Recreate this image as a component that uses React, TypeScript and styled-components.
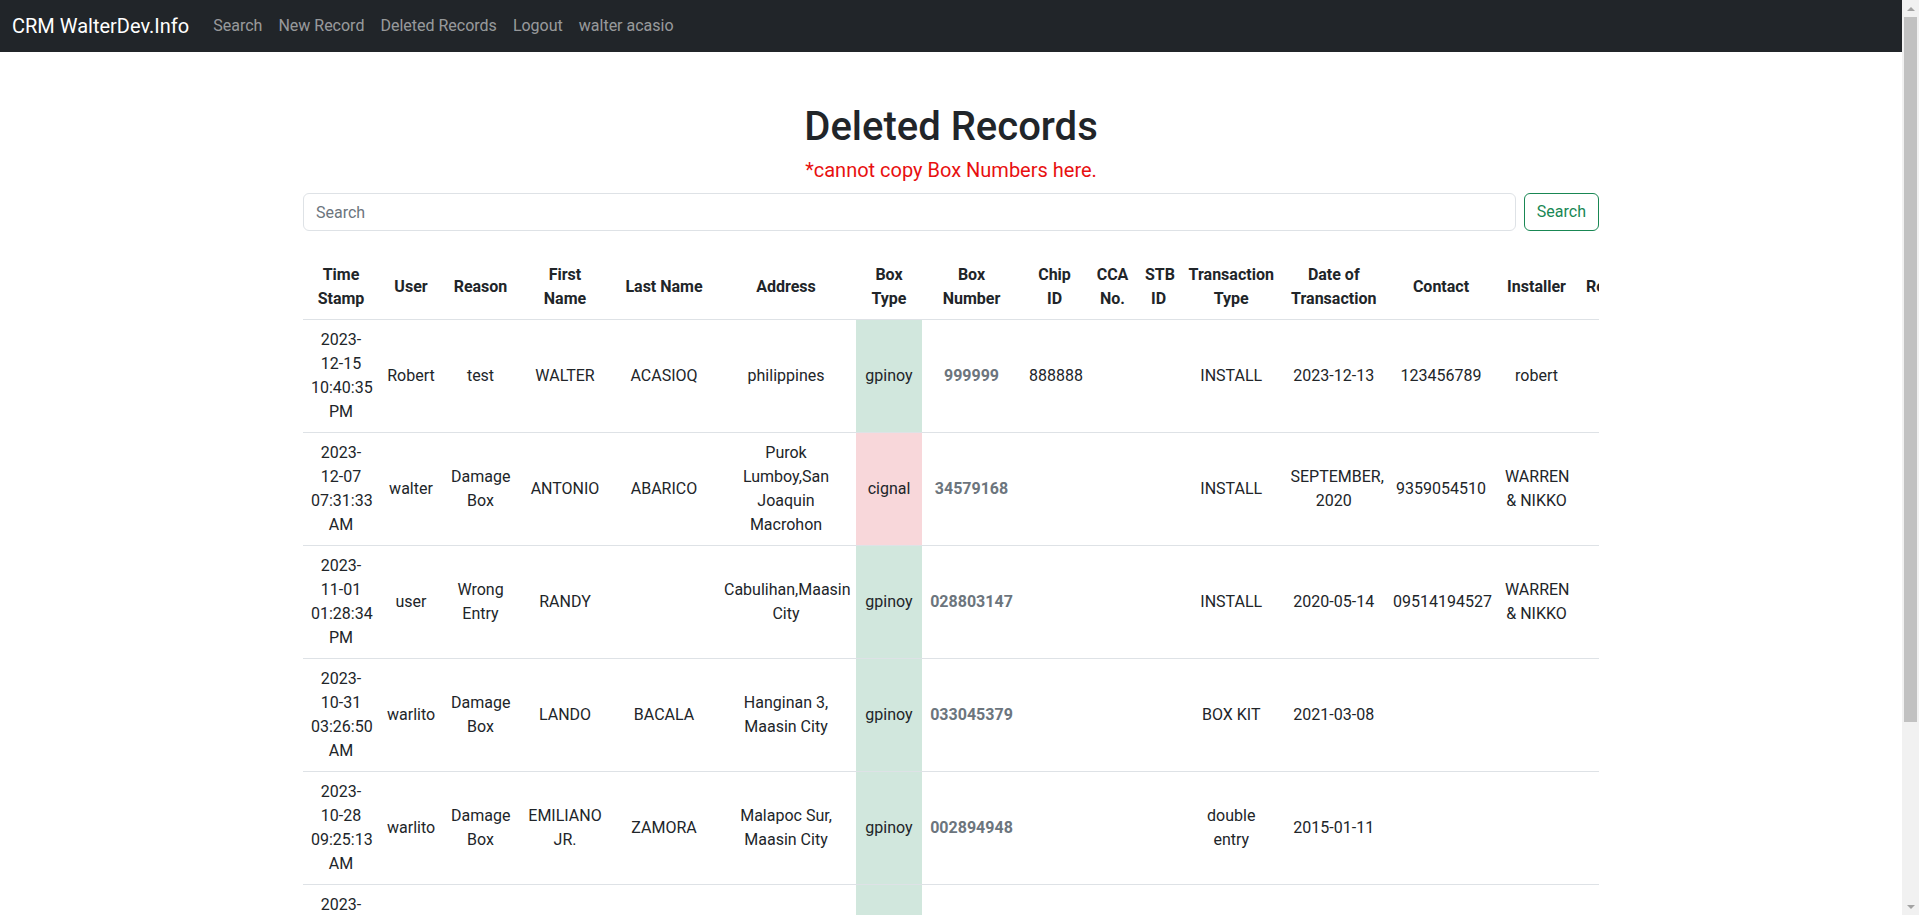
import React from "react";
import styled, { createGlobalStyle } from "styled-components";

const GlobalStyle = createGlobalStyle`
  *, *::before, *::after { box-sizing: border-box; }
  html, body { margin: 0; padding: 0; }
  body {
    padding-right: 17px;
    font-family: Roboto, "Noto Sans", "Liberation Sans", sans-serif;
    font-size: 16px;
    line-height: 1.5;
    color: #212529;
    background: #fff;
  }
`;

const Navbar = styled.nav`
  display: flex;
  align-items: center;
  height: 52px;
  padding: 0 12px;
  background: #212529;
`;

const Brand = styled.a`
  color: #fff;
  font-size: 20px;
  line-height: 30px;
  margin-right: 16px;
  text-decoration: none;
`;

const NavList = styled.div`
  display: flex;
  align-items: center;
`;

const NavLink = styled.a`
  padding: 8px;
  color: rgba(255, 255, 255, 0.55);
  font-size: 16px;
  line-height: 24px;
  text-decoration: none;
`;

const Container = styled.main`
  max-width: 1320px;
  margin: 0 auto;
  padding: 51px 12px 0;
`;

const Title = styled.h1`
  margin: 0 0 4px;
  text-align: center;
  font-size: 40px;
  font-weight: 500;
  line-height: 1.2;
`;

const Notice = styled.p`
  margin: 0 0 8px;
  text-align: center;
  color: #e81010;
  font-size: 20px;
  line-height: 30px;
`;

const SearchForm = styled.form`
  display: flex;
  gap: 8px;
  margin-bottom: 24px;
`;

const SearchInput = styled.input`
  flex: 1;
  height: 38px;
  padding: 6px 12px;
  border: 1px solid #dee2e6;
  border-radius: 6px;
  font: inherit;
  color: #212529;
  &::placeholder { color: #6c757d; }
`;

const SearchButton = styled.button`
  height: 38px;
  padding: 6px 12px;
  border: 1px solid #198754;
  border-radius: 6px;
  background: transparent;
  color: #198754;
  font: inherit;
`;

const TableWrap = styled.div`
  overflow-x: auto;
`;

const Table = styled.table`
  border-collapse: collapse;
  table-layout: fixed;
`;

const Col = styled.col<{ $w: number }>`
  width: ${(p) => p.$w}px;
`;

const Th = styled.th`
  padding: 8px;
  font-weight: 700;
  text-align: center;
  vertical-align: middle;
  border-bottom: 1px solid #dee2e6;
`;

const Td = styled.td<{ $tone?: "success" | "danger" }>`
  padding: 8px;
  text-align: center;
  vertical-align: middle;
  border-bottom: 1px solid #dee2e6;
  background: ${(p) =>
    p.$tone === "success" ? "#d1e7dd" : p.$tone === "danger" ? "#f8d7da" : "transparent"};
`;

const BoxNo = styled.span`
  font-weight: 700;
  color: #6c757d;
`;

/* emulation of the classic browser scrollbar shown in the screenshot */
const ScrollTrack = styled.div`
  position: fixed;
  top: 0;
  right: 0;
  width: 17px;
  height: 100vh;
  background: #f1f1f1;
  display: flex;
  flex-direction: column;
  align-items: center;
`;

const ScrollArrow = styled.div<{ $down?: boolean }>`
  height: 17px;
  width: 17px;
  display: flex;
  align-items: center;
  justify-content: center;
  &::before {
    content: "";
    border-left: 4px solid transparent;
    border-right: 4px solid transparent;
    ${(p) => (p.$down ? "border-top: 4px solid #a3a3a3;" : "border-bottom: 4px solid #a3a3a3;")}
  }
`;

const ScrollThumb = styled.div`
  width: 13px;
  height: 705px;
  background: #c1c1c1;
`;

const ScrollSpacer = styled.div`
  flex: 1;
`;

const columns: [string, number][] = [
  ["Time Stamp", 76],
  ["User", 64],
  ["Reason", 75],
  ["First Name", 94],
  ["Last Name", 104],
  ["Address", 140],
  ["Box Type", 66],
  ["Box Number", 99],
  ["Chip ID", 67],
  ["CCA No.", 49],
  ["STB ID", 43],
  ["Transaction Type", 102.5],
  ["Date of Transaction", 102.5],
  ["Contact", 112],
  ["Installer", 79],
  ["Remarks", 84],
  ["Action", 90],
];

type Row = {
  ts: string;
  user: string;
  reason: string;
  first: string;
  last: string;
  address: string;
  boxType: "gpinoy" | "cignal";
  boxNo: string;
  chip: string;
  cca: string;
  stb: string;
  txType: string;
  txDate: string;
  contact: string;
  installer: string;
  remarks: string;
};

const rows: Row[] = [
  { ts: "2023-12-15 10:40:35 PM", user: "Robert", reason: "test", first: "WALTER", last: "ACASIOQ", address: "philippines", boxType: "gpinoy", boxNo: "999999", chip: "888888", cca: "", stb: "", txType: "INSTALL", txDate: "2023-12-13", contact: "123456789", installer: "robert", remarks: "" },
  { ts: "2023-12-07 07:31:33 AM", user: "walter", reason: "Damage Box", first: "ANTONIO", last: "ABARICO", address: "Purok Lumboy,San Joaquin Macrohon", boxType: "cignal", boxNo: "34579168", chip: "", cca: "", stb: "", txType: "INSTALL", txDate: "SEPTEMBER, 2020", contact: "9359054510", installer: "WARREN & NIKKO", remarks: "" },
  { ts: "2023-11-01 01:28:34 PM", user: "user", reason: "Wrong Entry", first: "RANDY", last: "", address: "Cabulihan,Maasin City", boxType: "gpinoy", boxNo: "028803147", chip: "", cca: "", stb: "", txType: "INSTALL", txDate: "2020-05-14", contact: "09514194527", installer: "WARREN & NIKKO", remarks: "" },
  { ts: "2023-10-31 03:26:50 AM", user: "warlito", reason: "Damage Box", first: "LANDO", last: "BACALA", address: "Hanginan 3, Maasin City", boxType: "gpinoy", boxNo: "033045379", chip: "", cca: "", stb: "", txType: "BOX KIT", txDate: "2021-03-08", contact: "", installer: "", remarks: "" },
  { ts: "2023-10-28 09:25:13 AM", user: "warlito", reason: "Damage Box", first: "EMILIANO JR.", last: "ZAMORA", address: "Malapoc Sur, Maasin City", boxType: "gpinoy", boxNo: "002894948", chip: "", cca: "", stb: "", txType: "double entry", txDate: "2015-01-11", contact: "", installer: "", remarks: "" },
  { ts: "2023-10-21 04:12:08 PM", user: "warlito", reason: "Damage Box", first: "JUNREY", last: "LAGUMBAY", address: "Tunga-tunga, Maasin City", boxType: "gpinoy", boxNo: "017455216", chip: "", cca: "", stb: "", txType: "INSTALL", txDate: "2019-08-20", contact: "", installer: "", remarks: "" },
  { ts: "2023-10-18 11:05:47 AM", user: "walter", reason: "Wrong Entry", first: "MARLON", last: "GALLEGO", address: "Combado, Maasin City", boxType: "gpinoy", boxNo: "024417863", chip: "", cca: "", stb: "", txType: "INSTALL", txDate: "2020-02-03", contact: "", installer: "", remarks: "" },
];

const tableWidth = columns.reduce((s, c) => s + c[1], 0);

export default function App() {
  return (
    <>
      <GlobalStyle />
      <Navbar>
        <Brand href="#">CRM WalterDev.Info</Brand>
        <NavList>
          <NavLink href="#">Search</NavLink>
          <NavLink href="#">New Record</NavLink>
          <NavLink href="#">Deleted Records</NavLink>
          <NavLink href="#">Logout</NavLink>
          <NavLink href="#">walter acasio</NavLink>
        </NavList>
      </Navbar>
      <Container>
        <Title>Deleted Records</Title>
        <Notice>*cannot copy Box Numbers here.</Notice>
        <SearchForm onSubmit={(e) => e.preventDefault()}>
          <SearchInput type="search" placeholder="Search" />
          <SearchButton type="submit">Search</SearchButton>
        </SearchForm>
        <TableWrap>
          <Table style={{ width: tableWidth }}>
            <colgroup>
              {columns.map(([name, w]) => (
                <Col key={name} $w={w} />
              ))}
            </colgroup>
            <thead>
              <tr>
                {columns.map(([name]) => (
                  <Th key={name}>{name}</Th>
                ))}
              </tr>
            </thead>
            <tbody>
              {rows.map((r, i) => (
                <tr key={i}>
                  <Td>{r.ts}</Td>
                  <Td>{r.user}</Td>
                  <Td>{r.reason}</Td>
                  <Td>{r.first}</Td>
                  <Td>{r.last}</Td>
                  <Td>{r.address}</Td>
                  <Td $tone={r.boxType === "cignal" ? "danger" : "success"}>{r.boxType}</Td>
                  <Td>
                    <BoxNo>{r.boxNo}</BoxNo>
                  </Td>
                  <Td>{r.chip}</Td>
                  <Td>{r.cca}</Td>
                  <Td>{r.stb}</Td>
                  <Td>{r.txType}</Td>
                  <Td>{r.txDate}</Td>
                  <Td>{r.contact}</Td>
                  <Td>{r.installer}</Td>
                  <Td>{r.remarks}</Td>
                  <Td></Td>
                </tr>
              ))}
            </tbody>
          </Table>
        </TableWrap>
      </Container>
      <ScrollTrack aria-hidden="true">
        <ScrollArrow />
        <ScrollThumb />
        <ScrollSpacer />
        <ScrollArrow $down />
      </ScrollTrack>
    </>
  );
}
